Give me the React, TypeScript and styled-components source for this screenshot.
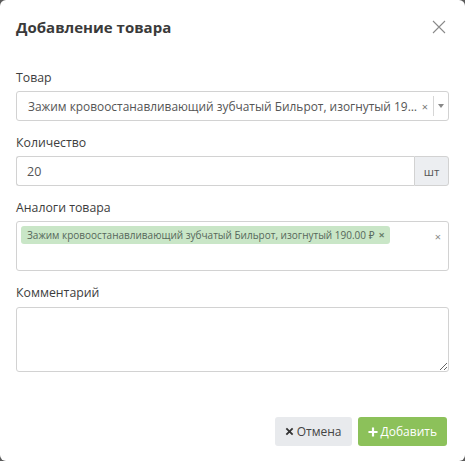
import styled, { createGlobalStyle } from 'styled-components'

const Global = createGlobalStyle`
  html, body {
    margin: 0;
    padding: 0;
    background: #5b5b5b;
  }
  body {
    font-family: "Open Sans", "Noto Sans", sans-serif;
  }
`

const Modal = styled.div`
  width: 465px;
  height: 461px;
  box-sizing: border-box;
  background: #fff;
  border-radius: 6px;
  display: flex;
  flex-direction: column;
`

const Header = styled.div`
  display: flex;
  align-items: center;
  justify-content: space-between;
  padding: 15px 19px 0 16px;
  height: 24px;
`

const Title = styled.h4`
  margin: 0;
  font-size: 15px;
  line-height: 20px;
  font-weight: 700;
  color: #3a3a3a;
`

const CloseButton = styled.button`
  border: 0;
  background: none;
  padding: 0;
  width: 14px;
  height: 14px;
  display: flex;
  cursor: pointer;
`

const Body = styled.div`
  padding: 30px 16px 0;
  display: flex;
  flex-direction: column;
  gap: 13px;
`

const Group = styled.div`
  display: flex;
  flex-direction: column;
  gap: 4px;
`

const Label = styled.label`
  font-size: 12.3px;
  line-height: 18px;
  color: #3d3d3d;
  font-weight: 500;
`

const SelectBox = styled.div`
  height: 30px;
  box-sizing: border-box;
  border: 1px solid #d2d2d2;
  border-radius: 3px;
  display: flex;
  align-items: center;
`

const SelectValue = styled.span`
  flex: 1;
  min-width: 0;
  padding-left: 11px;
  font-size: 11.9px;
  color: #555;
  white-space: nowrap;
  overflow: hidden;
  text-overflow: ellipsis;
`

const ClearMark = styled.span`
  font-size: 11px;
  color: #777;
  padding: 0 5px 0 3px;
  line-height: 1;
`

const Divider = styled.span`
  width: 1px;
  align-self: stretch;
  margin: 4px 0;
  background: #d6d6d6;
`

const Arrow = styled.span`
  width: 14px;
  display: flex;
  justify-content: center;
  &::after {
    content: '';
    border-left: 3px solid transparent;
    border-right: 3px solid transparent;
    border-top: 4px solid #888;
  }
`

const InputGroup = styled.div`
  display: flex;
  height: 30px;
`

const Input = styled.input`
  flex: 1;
  min-width: 0;
  box-sizing: border-box;
  border: 1px solid #d2d2d2;
  border-right: 0;
  border-radius: 3px 0 0 3px;
  padding: 0 10px;
  font-family: inherit;
  font-size: 12.5px;
  color: #555;
  outline: none;
`

const Addon = styled.span`
  width: 35px;
  box-sizing: border-box;
  border: 1px solid #d2d2d2;
  border-radius: 0 3px 3px 0;
  background: #eceef1;
  display: flex;
  align-items: center;
  justify-content: center;
  font-size: 11.5px;
  color: #555;
`

const MultiBox = styled.div`
  height: 50px;
  box-sizing: border-box;
  border: 1px solid #d2d2d2;
  border-radius: 3px;
  display: flex;
  align-items: flex-start;
  padding: 4px 0 0 4px;
`

const Tags = styled.div`
  flex: 1;
  display: flex;
  flex-wrap: wrap;
`

const Tag = styled.span`
  background: #c9e6c7;
  border-radius: 3px;
  font-size: 10px;
  line-height: 18px;
  color: #56675a;
  padding: 0 5px 0 6px;
  white-space: nowrap;
  display: inline-flex;
  align-items: center;
  gap: 4px;
`

const TagRemove = styled.span`
  font-weight: 700;
  font-size: 11px;
  color: #6a7f6a;
`

const MultiClear = styled.span`
  font-size: 11px;
  color: #888;
  padding: 3px 7px 0 0;
`

const TextArea = styled.textarea`
  height: 65px;
  margin-top: 1px;
  box-sizing: border-box;
  border: 1px solid #d2d2d2;
  border-radius: 3px;
  font-family: inherit;
  font-size: 12px;
  resize: vertical;
  outline: none;
`

const Footer = styled.div`
  margin-top: auto;
  display: flex;
  justify-content: flex-end;
  gap: 6px;
  padding: 0 18px 15px;
`

const Button = styled.button<{ $primary?: boolean }>`
  height: 29px;
  border: 0;
  border-radius: 3px;
  padding: 0 10px;
  font-family: inherit;
  font-size: 12px;
  display: inline-flex;
  align-items: center;
  gap: 3px;
  cursor: pointer;
  background: ${p => (p.$primary ? '#8cc15a' : '#e8eaed')};
  color: ${p => (p.$primary ? '#fff' : '#444')};
`

export default function App() {
  return (
    <>
      <Global />
      <Modal>
        <Header>
          <Title>Добавление товара</Title>
          <CloseButton aria-label="Закрыть">
            <svg width="14" height="14" viewBox="0 0 14 14">
              <path d="M1 1L13 13M13 1L1 13" stroke="#8a8a8a" strokeWidth="1.1" fill="none" />
            </svg>
          </CloseButton>
        </Header>
        <Body>
          <Group>
            <Label>Товар</Label>
            <SelectBox>
              <SelectValue>Зажим кровоостанавливающий зубчатый Бильрот, изогнутый 190.00 ₽</SelectValue>
              <ClearMark>×</ClearMark>
              <Divider />
              <Arrow />
            </SelectBox>
          </Group>
          <Group>
            <Label>Количество</Label>
            <InputGroup>
              <Input defaultValue="20" />
              <Addon>шт</Addon>
            </InputGroup>
          </Group>
          <Group>
            <Label>Аналоги товара</Label>
            <MultiBox>
              <Tags>
                <Tag>
                  Зажим кровоостанавливающий зубчатый Бильрот, изогнутый 190.00 ₽
                  <TagRemove>×</TagRemove>
                </Tag>
              </Tags>
              <MultiClear>×</MultiClear>
            </MultiBox>
          </Group>
          <Group>
            <Label>Комментарий</Label>
            <TextArea />
          </Group>
        </Body>
        <Footer>
          <Button>
            <svg width="9" height="9" viewBox="0 0 10 10">
              <path d="M1.5 1.5L8.5 8.5M8.5 1.5L1.5 8.5" stroke="#333" strokeWidth="2" />
            </svg>
            Отмена
          </Button>
          <Button $primary>
            <svg width="10" height="10" viewBox="0 0 11 11">
              <path d="M5.5 0.5V10.5M0.5 5.5H10.5" stroke="#fff" strokeWidth="2.4" />
            </svg>
            Добавить
          </Button>
        </Footer>
      </Modal>
    </>
  )
}
